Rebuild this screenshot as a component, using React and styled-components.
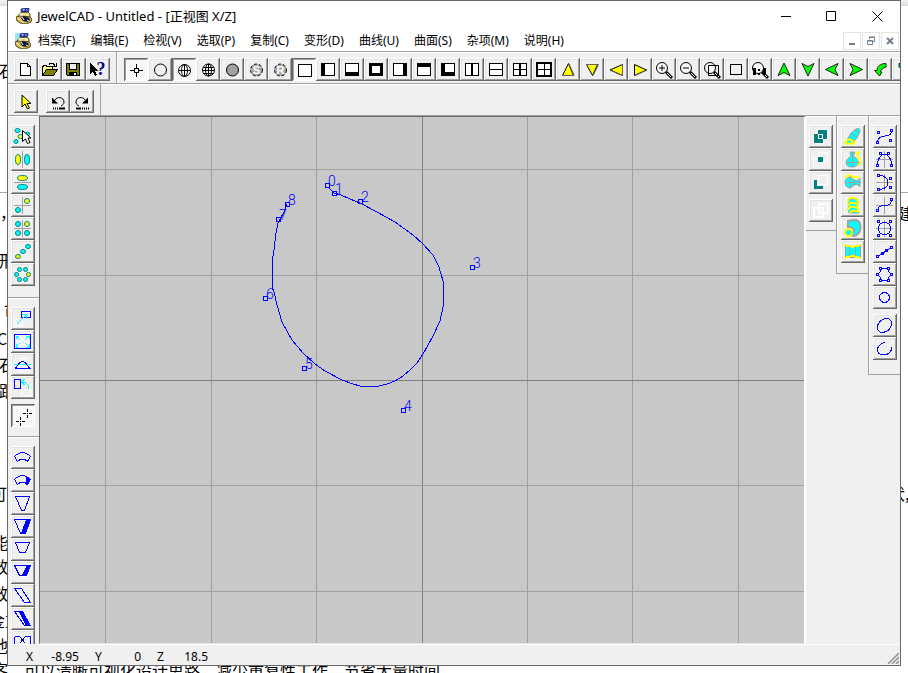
import React from "react";
import styled, { createGlobalStyle, css } from "styled-components";

const UI_FONT = '"Noto Sans", "Noto Sans CJK SC", sans-serif';
const BLUE = "#0000ff";
const CYAN = "#00ffff";
const YELLOW = "#ffff00";
const TEAL = "#008080";
const GRAY = "#a0a0a0";

const GlobalStyle = createGlobalStyle`
  * { box-sizing: border-box; }
  body { margin: 0; background: #fff; overflow: hidden; font-family: ${UI_FONT}; font-size: 12px; color: #000; }
  button { font: inherit; color: inherit; padding: 0; margin: 0; border: 0; background: none; }
`;

/* ---------- document behind the window ---------- */
const Desktop = styled.div`
  position: relative;
  height: 100vh;
  padding: 0 7px 7px;
  overflow: hidden;
`;
const Backdrop = styled.div`
  position: absolute;
  inset: 0;
  overflow: hidden;
  background: #fff;
  font: 16px/24px "Noto Sans CJK SC", sans-serif;
`;
const BackdropStrip = styled.div`
  height: 6px;
  background: linear-gradient(#f2f2f2, #dedede);
`;
const BackdropRule = styled.div`
  position: absolute;
  top: 192px;
  left: 0;
  right: 0;
  height: 1px;
  background: #a8a8a8;
`;
const BackdropText = styled.span`
  position: absolute;
  white-space: nowrap;
  top: ${(p) => p.$y - 12}px;
  left: ${(p) => p.$x}px;
`;

/* ---------- window ---------- */
const Window = styled.main`
  position: relative;
  display: flex;
  flex-direction: column;
  height: 100%;
  border: 1px solid #696969;
  background: #f0f0f0;
  overflow: hidden;
`;
const TitleBar = styled.header`
  display: flex;
  align-items: center;
  flex: none;
  height: 30px;
  padding-left: 8px;
  background: #fff;
`;
const Title = styled.h1`
  flex: 1;
  margin: 0 0 0 5px;
  font-size: 13px;
  font-weight: 400;
  line-height: 18px;
`;
const CaptionButton = styled.button`
  display: grid;
  place-items: center;
  width: 46px;
  height: 30px;
`;
const MenuBar = styled.nav`
  display: flex;
  align-items: center;
  flex: none;
  height: 20px;
  padding-left: 7px;
  background: #fff;
`;
const MenuList = styled.div`
  display: flex;
  flex: 1;
  gap: 15px;
  margin-left: 7px;
`;
const MenuItem = styled.button`
  line-height: 18px;
  white-space: nowrap;
`;
const ChildButtons = styled.div`
  display: flex;
  gap: 1px;
  padding-right: 1px;
`;
const ChildButton = styled.button`
  display: grid;
  place-items: center;
  width: 18px;
  height: 18px;
  border: 1px solid #e3e3e3;
`;
const Toolbar = styled.div`
  display: flex;
  flex: none;
  height: 32px;
  border-top: 1px solid #a0a0a0;
  box-shadow: inset 0 1px #fff;
  overflow: hidden;
`;
const ToolGroup = styled.div`
  display: flex;
  flex: none;
  padding: 6px 6px 0;
  border-right: ${(p) => (p.$open ? "0" : "1px solid #a0a0a0")};
  & + & { padding-left: 7px; box-shadow: inset 1px 0 #fff; }
`;
const Gap = styled.span`
  flex: none;
  width: 8px;
  height: ${(p) => p.$size || 8}px;
`;
const raised = css`
  background: #f0f0f0;
  box-shadow: inset -1px -1px #696969, inset 1px 1px #fff, inset -2px -2px #a0a0a0, inset 2px 2px #e3e3e3;
`;
const sunken = css`
  background: repeating-conic-gradient(#fff 0 25%, #f0f0f0 0 50%) 0 0 / 2px 2px;
  box-shadow: inset 1px 1px #696969, inset -1px -1px #fff, inset 2px 2px #a0a0a0;
`;
const ToolButton = styled.button`
  display: block;
  flex: none;
  width: 24px;
  height: 23px;
  padding: ${(p) => (p.$pressed ? "2px 1px 0 3px" : "1px 2px")};
  overflow: hidden;
  ${(p) => (p.$pressed ? sunken : raised)}
  svg { display: block; }
`;
const Body = styled.div`
  display: flex;
  flex: 1;
  min-height: 0;
  border-top: 1px solid #a0a0a0;
`;
const SideBar = styled.div`
  flex: none;
  width: 31px;
  overflow: hidden;
`;
const SideGroup = styled.div`
  display: flex;
  flex-direction: column;
  padding: 9px 3px ${(p) => p.$end}px;
  border-bottom: 1px solid #a0a0a0;
  box-shadow: inset 0 1px #fff;
`;
const CanvasFrame = styled.section`
  flex: 1;
  min-width: 0;
  background: #c8c8c8;
  border: solid;
  border-width: 1px 2px 1px 1px;
  border-color: #696969 #fff #e3e3e3 #696969;
  svg { display: block; }
`;
const DockArea = styled.aside`
  display: flex;
  align-items: flex-start;
  flex: none;
`;
const DockColumn = styled.div`
  display: flex;
  flex-direction: column;
  padding: 9px 3px ${(p) => p.$end}px;
  border-bottom: 1px solid #a0a0a0;
  box-shadow: inset 0 1px #fff;
  & + & { border-left: 1px solid #a0a0a0; box-shadow: inset 1px 1px #fff; padding-left: 4px; }
`;
const StatusBar = styled.footer`
  position: relative;
  display: flex;
  align-items: center;
  flex: none;
  height: 21px;
  padding: 3px 0 0 18px;
  border-top: 1px solid #fff;
  line-height: 18px;
`;
const Axis = styled.span`
  width: 15px;
`;
const Reading = styled.output`
  width: ${(p) => p.$w}px;
  margin-right: 16px;
  text-align: right;
`;
const Grip = styled.svg`
  position: absolute;
  right: 1px;
  bottom: 1px;
`;
const PointLabel = styled.text`
  font: 300 14px "Roboto", sans-serif;
  fill: ${BLUE};
`;
const GlyphLabel = styled.text`
  font: 700 ${(p) => p.$size}px ${(p) => (p.$serif ? '"Liberation Serif", serif' : '"Liberation Sans", sans-serif')};
  text-anchor: middle;
  fill: ${(p) => p.$fill};
`;

/* ---------- icon building blocks ---------- */
const Icon = ({ children, smooth }) => (
  <svg width="20" height="21" viewBox="0 0 20 21" fill="none" stroke="#000" shapeRendering={smooth ? "auto" : "crispEdges"}>
    {children}
  </svg>
);
const Dot = ({ x, y, c = CYAN, rx = 3, ry = 2.5 }) => (
  <ellipse cx={x} cy={y} rx={rx} ry={ry} fill={c} stroke={TEAL} />
);
const Cross = ({ x = 9.5, y = 10.5 }) => <path d={`M${x} 2v17M1 ${y}h17`} stroke={GRAY} />;
const Node = ({ x, y, fill = "#f0f0f0" }) => (
  <rect x={x - 1} y={y - 1} width="2" height="2" fill={fill} stroke={BLUE} />
);
const Pane = ({ l = 1, t = 1, r = 1, b = 1, d }) => (
  <Icon>
    <rect x="3" y="4" width="14" height="13" fill="#000" stroke="none" />
    <rect x={3 + l} y={4 + t} width={14 - l - r} height={13 - t - b} fill="#fff" stroke="none" />
    {d && <path d={d} />}
  </Icon>
);
const Lens = ({ children }) => (
  <Icon smooth>
    <circle cx="8" cy="9" r="5.5" fill="#f8f8f8" />
    <path d="M12 13l6 6" strokeWidth="3" />
    <path d="M13 14l4 4" stroke="#fff" />
    {children}
  </Icon>
);
const Arrow = ({ a }) => (
  <Icon smooth>
    <path transform={`rotate(${a} 10 10.5)`} d="M10 4l6 12.5-6-3-6 3z" fill="#00ff00" stroke="#202020" />
  </Icon>
);
const wedges = {
  up: ["M10.500 4.500L15.500 16.500h-11z", "M11 5l5 11v.5H4"],
  down: ["M10.500 16.500L15.500 5.500h-11z", "M4 5.500h12.500L11 16.500"],
  left: ["M4 11L16.500 5.500v11z", "M16.500 5v11.500L4.500 11"],
  right: ["M16.500 11L4.500 5.500v11z", "M4.500 16.500L17 11"],
};
const Wedge = ({ to }) => (
  <Icon smooth>
    <path d={wedges[to][0]} fill={YELLOW} />
    <path d={wedges[to][1]} stroke="#606060" />
  </Icon>
);
const Ball = ({ children, fill = "none" }) => (
  <Icon smooth>
    <circle cx="10.5" cy="11" r="6" fill={fill} />
    {children}
  </Icon>
);
const ShadedBall = ({ letter }) => (
  <Icon smooth>
    <circle cx="10.500" cy="11" r="6" fill="#a8a8a8" strokeDasharray="3 2" />
    <GlyphLabel x="10.500" y="15" $size={11} $fill="#fff" stroke="none">{letter}</GlyphLabel>
  </Icon>
);
const Blue = ({ d, fill }) => (
  <Icon>
    <path d={d} stroke="#fff" transform="translate(1 1)" />
    <path d={d} stroke={BLUE} fill="#f0f0f0" />
    {fill && <path d={fill} fill={BLUE} stroke={BLUE} />}
  </Icon>
);
const Nodes = ({ d, pts, cross, solid = [] }) => (
  <Icon>
    {cross && <Cross />}
    <path d={d} stroke={BLUE} />
    {pts.map(([x, y]) => <Node key={`${x}-${y}`} x={x + 0.5} y={y + 0.5} />)}
    {solid.map(([x, y]) => <Node key={`${x}-${y}`} x={x + 0.5} y={y + 0.5} fill={BLUE} />)}
  </Icon>
);

/* ---------- tool definitions: [label, icon, pressed] ---------- */
const fileTools = [
  ["新建", <Icon><path d="M4.5 4.5h7l3 3v9h-10z" fill="#fff" /><path d="M11.5 4.5v3h3" /></Icon>],
  ["打开", <Icon><path d="M2.5 16.5v-9h1v-1h3v1h6v3" fill="#ffff80" /><path d="M2.5 16.5l4-6h11l-4 6z" fill="#808000" /><path d="M9 5.5l1-1h3l2 2M16.5 4v3.5h-4" /></Icon>],
  ["保存", <Icon><path d="M2.5 4.5h13v12h-12l-1-1z" fill="#808000" /><path d="M5.5 4.5h7v6h-7z" fill="#f0f0f0" /><path d="M5 13h8v4H5z" fill="#000" stroke="none" /><path d="M10 14h2v2h-2z" fill="#fff" stroke="none" /></Icon>],
  ["说明", <Icon><path d="M2 4v11l2.500-2.500 2.500 4.500 2-1-2.500-4.500h3z" fill="#000" stroke="none" /><GlyphLabel x="13" y="16" $size={18} $serif $fill="#000080" stroke="none">?</GlyphLabel></Icon>],
];
const viewTools = [
  ["十字", <Icon><path d="M9.500 4v4M9.500 13v4M3 10.500h4M12 10.500h4M7.500 8.500h4v4h-4z" /></Icon>, true],
  ["线框", <Ball />],
  ["简易线框", <Icon smooth><circle cx="9.500" cy="10.500" r="6" fill="#fff" /><ellipse cx="9.500" cy="10.500" rx="3" ry="6" /><path d="M9.500 4.500v12M3.500 10.500h12" /></Icon>, true],
  ["细致线框", <Ball fill="#fff"><ellipse cx="10.5" cy="11" rx="3" ry="6" /><path d="M10.500 5v12M4.500 11.500h12M5.500 8.500h10M5.500 14.500h10" /></Ball>],
  ["快影", <Ball fill="#a0a0a0" />],
  ["彩影", <ShadedBall letter="S" />],
  ["渲染", <ShadedBall letter="R" />],
  ["正视图", <Pane />, true],
  ["左视图", <Pane l={4} />],
  ["下视图", <Pane b={4} />],
  ["背视图", <Pane l={3} t={3} r={3} b={3} />],
  ["右视图", <Pane r={4} />],
  ["上视图", <Pane t={4} />],
  ["立体图", <Pane l={4} b={4} />],
  ["左右分割", <Icon><path d="M3.500 4.500h13v12h-13z" fill="#fff" /><path d="M10 4v13" strokeWidth="2" /></Icon>],
  ["上下分割", <Pane d="M3 10.500h14" />],
  ["四分割", <Pane d="M3 10.500h14M9.500 4v13M10.500 4v13" />],
  ["四视图", <Icon><path d="M3 4h14v13H3z" fill="#fff" strokeWidth="2" /><path d="M3 10.500h14M10.500 4v13" /></Icon>],
  ["上移", <Wedge to="up" />],
  ["下移", <Wedge to="down" />],
  ["左移", <Wedge to="left" />],
  ["右移", <Wedge to="right" />],
  ["放大", <Lens><path d="M5 9h6M8 6v6" /></Lens>],
  ["缩小", <Lens><path d="M5 9h6" /></Lens>],
  ["窗口缩放", <Lens><path d="M6.500 6.500h10v10h-10z" /></Lens>],
  ["全图", <Icon><rect x="4.500" y="5.500" width="11" height="10" /></Icon>],
  ["原比例", <Lens><path d="M4.500 9v7M14.500 9v7" strokeWidth="3" /><path d="M8 10h2v2H8zM8 14h2v2H8z" fill="#000" stroke="none" /></Lens>],
  ["上转", <Arrow a={0} />],
  ["下转", <Arrow a={180} />],
  ["左转", <Arrow a={-90} />],
  ["右转", <Arrow a={90} />],
  ["旋转", <Icon smooth><path d="M16 4.500c-6 0-9 3-9 7H4.500l5 5.500 2.500-4h-1.500c0-2 2-4 5.500-5z" fill="#00ff00" stroke="#202020" /></Icon>],
  ["反转", <Icon smooth><path d="M5 4.500c6 0 9 3 9 7h2.500l-5 5.500-2.500-4h1.500c0-2-2-4-5.500-5z" fill="#00ff00" stroke="#202020" /></Icon>],
];
const editTools = [
  ["选取", <Icon smooth><path d="M6 4v12l3-3 2.500 5 2-1-2.500-4.500h4z" fill={YELLOW} /></Icon>],
  null,
  ["撤销", <Icon smooth><path d="M7 9c2-4 9-3 9 2 0 2-1 3-3 4" /><path d="M4 6.500v6h6z" fill="#000" stroke="none" /><path d="M5 17.500h8" strokeDasharray="1 1" strokeWidth="2" /><path d="M12 17.500h5" strokeWidth="2" /></Icon>],
  ["重做", <Icon smooth><path d="M13 9c-2-4-9-3-9 2 0 2 1 3 3 4" /><path d="M16 6.500v6h-6z" fill="#000" stroke="none" /><path d="M8 17.500h9" strokeDasharray="1 1" strokeWidth="2" /><path d="M4 17.500h4" strokeWidth="2" /></Icon>],
];
const copyTools = [
  ["直接复制", <Icon smooth><Dot x={4.5} y={4.5} rx={2.5} ry={2} /><Dot x={7.5} y={10.5} c={YELLOW} rx={2.5} ry={2} /><Dot x={3} y={15.5} rx={2} ry={2} /><Dot x={14.5} y={8} rx={2} ry={2} /><path d="M9.500 4.500v11l3-2.500 2 4.500 2.500-1-2-4.500h3z" fill="#fff" /></Icon>],
  ["左右复制", <Icon smooth><path d="M9.500 2v17" stroke={GRAY} /><Dot x={5} y={10.5} rx={2.5} ry={5} c={YELLOW} /><Dot x={14} y={10.5} rx={2.5} ry={5} /></Icon>],
  ["上下复制", <Icon smooth><path d="M1 10.500h17" stroke={GRAY} /><Dot x={9.5} y={6} rx={5} c={YELLOW} /><Dot x={9.5} y={15} rx={5} /></Icon>],
  ["旋转复制", <Icon smooth><Cross /><Dot x={14} y={6} c={YELLOW} rx={2.5} /><Dot x={5} y={15} rx={2.5} /></Icon>],
  ["四方复制", <Icon smooth><Cross /><Dot x={5} y={6} rx={2.5} /><Dot x={14} y={6} c={YELLOW} rx={2.5} /><Dot x={5} y={15} rx={2.5} /><Dot x={14} y={15} rx={2.5} /></Icon>],
  ["直线复制", <Icon smooth><Dot x={5} y={15.5} c={YELLOW} rx={2.5} ry={2} /><Dot x={10} y={10.5} rx={2.5} ry={2} /><Dot x={15} y={5.5} rx={2.5} ry={2} /></Icon>],
  ["环形复制", <Icon smooth><Dot x={6.5} y={5.5} rx={2} ry={2} /><Dot x={12.5} y={5.5} rx={2} ry={2} /><Dot x={3.5} y={10.5} rx={2} ry={2} /><Dot x={15.5} y={10.5} rx={2} ry={2} c={YELLOW} /><Dot x={6.5} y={15.5} rx={2} ry={2} /><Dot x={12.5} y={15.5} rx={2} ry={2} /></Icon>],
];
const moveTools = [
  ["移动", <Icon><path d="M1.500 11.500h8v6h-8z" stroke="#fff" /><path d="M8.500 3.500h9v6h-9z" stroke={BLUE} /><path d="M4 16l9-9M9 6.500h4.500V11" stroke={CYAN} /></Icon>],
  ["尺寸", <Icon><path d="M1.500 3.500h16v14h-16z" stroke={BLUE} /><path d="M6.500 8.500h6v5h-6z" stroke="#fff" /><path d="M3 5l4 4M16 5l-4 4M3 16l4-4M16 16l-4-4M3 8V5h3M13 5h3v3M3 13v3h3M13 16h3v-3" stroke={CYAN} /></Icon>],
  ["弯曲", <Icon><path d="M6.500 4.500h7v13h-7z" stroke="#fff" /><path d="M1 10.500h17" stroke={CYAN} /><path d="M1.500 14.500c3 0 3-7 8-7s5 7 8 7z" stroke={BLUE} /></Icon>],
  ["反转", <Icon><path d="M8.500 12.500h9v6h-9z" stroke="#fff" /><path d="M1.500 2.500h6v9h-6z" stroke={BLUE} /><path d="M15 12V8l-3-3H9M11.500 2L8.500 5l3 3" stroke={CYAN} /></Icon>],
  null,
  ["多点", <Icon><path d="M13.500 3v3M13.500 7v1M13.500 9v3M9 7.500h3M13 7.500h1M15 7.500h3M6.500 11v3M6.500 15v1M6.500 17v3M2 15.500h3M6 15.500h1M8 15.500h3" /></Icon>, true],
];
const surfaceTools = [
  ["弧形", <Blue d="M1.500 9.500l3 5Q9.500 9.500 14.500 14.500l3-5Q9.500 1.500 1.500 9.500z" />],
  ["弧形实体", <Blue d="M1.500 9.500l3 5Q9.500 9.500 14.500 14.500l3-5Q9.500 1.500 1.500 9.500z" fill="M13.500 6.500l4 3-3 5-2-1 1-2z" />],
  ["梯形", <Blue d="M2.500 3.500h14l-5 14h-3z" />],
  ["梯形实体", <Blue d="M1.500 3.500h16l-5 14h-5z" fill="M13.500 3.500h4l-5 14h-4z" />],
  ["短梯形", <Blue d="M2.500 3.500h14l-4 10h-6z" />],
  ["短梯形实体", <Blue d="M1.500 3.500h16l-4 10h-7z" fill="M14.500 3.500h3l-5 10h-3z" />],
  ["平行", <Blue d="M1.500 3.500h7l9 14h-6z" />],
  ["平行实体", <Blue d="M1.500 3.500h7l9 14h-6z" fill="M6.500 3.500h3l8 14h-4z" />],
  ["蝶形", <Blue d="M1.500 5.500h5l6 7M17.500 5.500h-5l-6 7M1.500 5.500v12M17.500 5.500v12" />],
];
const booleanTools = [
  ["联集", <Icon><path d="M7 4h9v9H7z" fill={TEAL} stroke="none" /><path d="M3 8h9v9H3z" fill={TEAL} stroke="none" /><path d="M7.500 8.500h4v4h-4z" stroke="#fff" /><path d="M2.500 7.500h4v-4h10v10h-4v4h-10z" stroke="#fff" /></Icon>],
  ["交集", <Icon><path d="M7.500 3.500h9v9h-9zM2.500 7.500h9v9h-9z" stroke="#fff" /><path d="M7 8h5v5H7z" fill={TEAL} stroke="none" /></Icon>],
  ["差集", <Icon><path d="M7.500 3.500h9v9h-9z" stroke="#fff" /><path d="M3 8h3v6h6v3H3z" fill={TEAL} stroke="none" /></Icon>],
  null,
  ["还原", <Icon><path d="M7.500 3.500h9v9h-9zM2.500 7.500h9v9h-9z" stroke="#fff" strokeWidth="2" /></Icon>],
];
const solidTools = [
  ["管状曲面", <Icon smooth><path d="M13 3q4-2 4 2l-3 7-5 5-5-3 4-7z" fill={CYAN} stroke={GRAY} /><path d="M11 4q4 0 5 4M8 8q4 0 6 4M6 11q4 0 5 5" stroke={GRAY} /><path d="M2 17.500v-1q4-6 9 0v1z" stroke={YELLOW} strokeWidth="2" fill={CYAN} /></Icon>],
  ["纵向环形", <Icon smooth><path d="M7 3h5q-3 5 1 6c4 3 2 9-3 9h-3c-5-1-5-7-1-9q3-2 1-6z" fill={CYAN} stroke={GRAY} /><path d="M13 3.500h3q-3 3 0 5 3 4-1 8" stroke={YELLOW} strokeWidth="2" /><path d="M9.500 3v15M3 13.500h13" stroke={GRAY} /></Icon>],
  ["横向环形", <Icon smooth><path d="M2 10.500c0-6 7-7 9-2q3 1 6-2v8q-3-3-6-2c-2 5-9 4-9-2z" fill={CYAN} stroke={GRAY} /><path d="M2.500 6q2-4 6-2 4 3 8 0" stroke={YELLOW} strokeWidth="2" /><path d="M2 10.500h16M7 4v13M11 7v7" stroke={GRAY} /></Icon>],
  ["导轨曲面", <Icon smooth><path d="M5 6q5-4 9-1l1 4-1 4 2 5H6l-1-5 1-3z" fill={CYAN} stroke={GRAY} /><path d="M5 7q0-5 6-4 4 1 4 5M5 11q1-4 5-3 5 0 5 4M5 15q1-4 6-3 4 0 4 3M7 18q1-3 5-2 4 0 5 1" stroke={YELLOW} strokeWidth="2" /></Icon>],
  ["线面连接", <Icon smooth><path d="M5 3q4-1 8-1c7 2 6 15-3 16l-3-3q4 0 4-3-1-3-6-3z" fill={CYAN} stroke={GRAY} strokeWidth="2" /><circle cx="5.500" cy="14.500" r="3.500" fill={CYAN} stroke={YELLOW} strokeWidth="2" /></Icon>],
  ["四边曲面", <Icon><path d="M2 5h15v11H2z" fill={CYAN} stroke={GRAY} /><path d="M6.500 5v11M12.500 5v11" stroke={GRAY} /><path d="M1 4c5 2 12 2 17 0M1 17c5-2 12-2 17 0" stroke={YELLOW} strokeWidth="2" /></Icon>],
];
const curveTools = [
  ["任意曲线", <Nodes d="M2.500 15c2-5 5-5 7-5s6 0 7-4" pts={[[2, 16], [3, 6], [16, 4], [15, 14]]} />],
  ["左右对称线", <Nodes cross d="M2.500 16c0-14 14-14 14 0" pts={[[2, 16], [16, 16], [5, 4], [13, 4]]} />],
  ["上下对称线", <Nodes cross d="M4 3.500c12 0 12 14 0 14" pts={[[3, 3], [15, 6], [15, 15], [3, 17]]} />],
  ["旋转对称线", <Nodes cross d="M2.500 15c1-4 3-4 7-4.500s6 0 7-5" pts={[[2, 15], [16, 4]]} />],
  ["封闭曲线", <Nodes cross d="M9.500 4.500c8 0 8 12 0 12s-8-12 0-12z" pts={[[3, 3], [15, 3], [3, 17], [15, 17]]} />],
  ["直线", <Nodes d="M2.500 15.500l14-9" pts={[[2, 15], [16, 6]]} solid={[[7, 12], [11, 9]]} />],
  ["多边形", <Nodes d="M5.500 4.500h8v3l3 3-3 3v3h-8v-3l-3-3 3-3z" pts={[[5, 4], [13, 4], [2, 10], [16, 10], [5, 16], [13, 16]]} />],
  ["圆形", <Icon><circle cx="9.500" cy="10.500" r="5" stroke={BLUE} /></Icon>],
  null,
  ["椭圆", <Icon><ellipse cx="9.500" cy="10.500" rx="8" ry="6" transform="rotate(-40 9.500 10.500)" stroke={BLUE} /></Icon>],
  ["弧线", <Icon><path d="M10 4.500C5 5 1 10 3 14s9 4 12 0c2-2 2-4 1.500-5" stroke={BLUE} /></Icon>],
];

const Tools = ({ items, gap }) =>
  items.map((tool, i) =>
    tool ? (
      <ToolButton key={tool[0]} type="button" aria-label={tool[0]} aria-pressed={tool[2] || undefined} $pressed={tool[2]}>
        {tool[1]}
      </ToolButton>
    ) : (
      <Gap key={`gap-${i}`} $size={gap} />
    )
  );

const AppIcon = ({ tinted }) => (
  <svg width="16" height="16" viewBox="0 0 16 16" fill="none" aria-hidden="true">
    {tinted && <path d="M0 0h7L3 10H0z" fill="#9be4f5" />}
    <path d="M5 1l3-1h5v3l-2 2-6-1z" fill="#2038b0" stroke="#303050" strokeWidth=".6" />
    <path d="M6 1.500l3-.5-1 2zM10 1l2 1-1 1z" fill="#c8dcff" />
    <path d="M2 8l2-3 8-1 2 2v3H2z" fill="#e8cf70" stroke="#332a08" strokeWidth=".8" />
    <path d="M0 9l4-1 10 1 2 2-1 3-5 2-6-1-3-2z" fill="#d9b64a" stroke="#332a08" strokeWidth=".8" />
    <path d="M3 6c3-1 7-1 10 1M1 10c3 1 4 4 7 5" stroke="#fff6b0" />
    <path d="M5 10l3-2 5 2 1 2-2 2-5-1z" fill="#101840" />
    <path d="M6 9l2 3M11 12l2 1M4 7h3M10 7h2" stroke="#fff" />
  </svg>
);

/* ---------- drawing canvas ---------- */
const gridX = [65, 171, 276, 382, 487, 592, 698];
const gridY = [52, 158, 263, 368, 474];
const controlPoints = [[287, 68], [294, 76], [320, 84], [432, 150], [363, 293], [264, 251], [225, 181], [238, 102], [247, 87]];
const curve =
  "289,71 294,76 301,78 310,82 320,86 337,95 355,105 373,118 383,127 393,138 399,150 403,164 404,176 403,190 400,204 393,219 383,237 377,246 370,253 363,259 355,264 347,267 339,269 320,269 313,267 302,263 285,254 275,247 263,236 252,223 242,205 237,188 234,175 232,170 232,146 234,133 236,116 238,106 245,93 247,87";

const Canvas = () => (
  <CanvasFrame aria-label="正视图">
    <svg width="100%" height="100%" fill="none" shapeRendering="crispEdges">
      {gridX.map((x) => <rect key={x} x={x} y="0" width="1" height="100%" fill={x === 382 ? "#808080" : GRAY} />)}
      {gridY.map((y) => <rect key={y} x="0" y={y} width="100%" height="1" fill={y === 263 ? "#808080" : GRAY} />)}
      <polyline points={curve} stroke={BLUE} />
      {controlPoints.map(([x, y], i) => (
        <g key={i}>
          <rect x={x - 1.5} y={y - 1.5} width="4" height="4" stroke={BLUE} />
          <PointLabel x={x + 1} y={y + 1}>{i}</PointLabel>
        </g>
      ))}
    </svg>
  </CanvasFrame>
);

const backdropLines = [
  ["石", -1, 70], ["，", 0, 212], ["形", -1, 260], ["可", 4, 311], ["CA", -3, 338], ["石", -1, 364],
  ["跟", -1, 390], ["可", -9, 493], ["能", -8, 542], ["效", -8, 566], ["效", -8, 593], ["金重", -11, 620],
  ["他", -8, 645], ["客", -8, 669], ["可以清晰可视化设计思路、减少重复性工作，节省大量时间", 24, 670],
];
const menus = ["档案(F)", "编辑(E)", "检视(V)", "选取(P)", "复制(C)", "变形(D)", "曲线(U)", "曲面(S)", "杂项(M)", "说明(H)"];

export default function App() {
  return (
    <Desktop>
      <GlobalStyle />
      <Backdrop aria-hidden="true">
        <BackdropStrip />
        <BackdropRule />
        {backdropLines.map(([t, x, y]) => <BackdropText key={y + t} $x={x} $y={y}>{t}</BackdropText>)}
        <BackdropText $x={898} $y={213}>建</BackdropText>
        <BackdropText $x={889} $y={493}>伏,</BackdropText>
      </Backdrop>
      <Window>
        <TitleBar>
          <AppIcon />
          <Title>JewelCAD - Untitled - [正视图 X/Z]</Title>
          <CaptionButton type="button" aria-label="最小化">
            <svg width="11" height="11" stroke="#000" fill="none"><path d="M1 5.500h10" /></svg>
          </CaptionButton>
          <CaptionButton type="button" aria-label="最大化">
            <svg width="11" height="11" stroke="#000" fill="none"><path d="M.5.5h9v9h-9z" /></svg>
          </CaptionButton>
          <CaptionButton type="button" aria-label="关闭">
            <svg width="11" height="11" stroke="#000" fill="none"><path d="M.5.5l10 10M10.500.5l-10 10" /></svg>
          </CaptionButton>
        </TitleBar>
        <MenuBar>
          <AppIcon tinted />
          <MenuList>{menus.map((m) => <MenuItem key={m} type="button">{m}</MenuItem>)}</MenuList>
          <ChildButtons>
            <ChildButton type="button" aria-label="最小化视图">
              <svg width="10" height="10" fill="#708090"><path d="M2 7h6v2H2z" /></svg>
            </ChildButton>
            <ChildButton type="button" aria-label="还原视图">
              <svg width="10" height="10" fill="none" stroke="#708090"><path d="M3.500 3V1.500h5v4H7M3 1h6M1.500 4.500h5v4h-5zM1 5h6" /></svg>
            </ChildButton>
            <ChildButton type="button" aria-label="关闭视图">
              <svg width="10" height="10" stroke="#708090" strokeWidth="2"><path d="M2 2l6 6M8 2L2 8" /></svg>
            </ChildButton>
          </ChildButtons>
        </MenuBar>
        <Toolbar role="toolbar">
          <ToolGroup><Tools items={fileTools} /></ToolGroup>
          <ToolGroup $open><Tools items={viewTools} /></ToolGroup>
        </Toolbar>
        <Toolbar role="toolbar">
          <ToolGroup><Tools items={editTools} /></ToolGroup>
        </Toolbar>
        <Body>
          <SideBar>
            <SideGroup $end={11}><Tools items={copyTools} /></SideGroup>
            <SideGroup $end={9}><Tools items={moveTools} gap={5} /></SideGroup>
            <SideGroup $end={9}><Tools items={surfaceTools} /></SideGroup>
          </SideBar>
          <Canvas />
          <DockArea>
            <DockColumn $end={8}><Tools items={booleanTools} gap={5} /></DockColumn>
            <DockColumn $end={10}><Tools items={solidTools} /></DockColumn>
            <DockColumn $end={14}><Tools items={curveTools} gap={5} /></DockColumn>
          </DockArea>
        </Body>
        <StatusBar>
          <Axis>X</Axis><Reading $w={38}>-8.95</Reading>
          <Axis>Y</Axis><Reading $w={31}>0</Reading>
          <Axis>Z</Axis><Reading $w={36}>18.5</Reading>
          <Grip width="12" height="12" stroke="#909090" strokeWidth="1.500"><path d="M1 12L12 1M5 12l7-7M9 12l3-3" /></Grip>
        </StatusBar>
      </Window>
    </Desktop>
  );
}
